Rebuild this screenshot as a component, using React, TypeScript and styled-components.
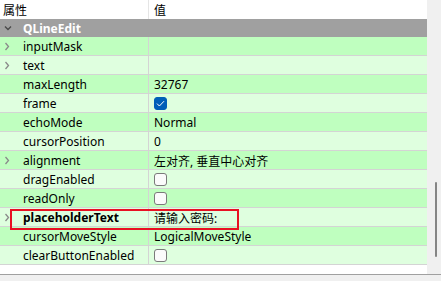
import React from 'react';
import styled, { createGlobalStyle } from 'styled-components';

const GlobalStyle = createGlobalStyle`
  html, body {
    margin: 0;
    padding: 0;
    background: #f0f0f0;
  }
  body {
    font-family: "Noto Sans", "Noto Sans CJK SC", sans-serif;
    font-size: 12px;
    color: #000;
  }
`;

const Window = styled.div`
  width: 441px;
  height: 281px;
  display: flex;
  flex-direction: column;
  overflow: hidden;
`;

const Main = styled.div`
  display: flex;
  height: 274px;
  border-bottom: 1px solid #a0a0a0;
`;

const Table = styled.div`
  width: 427px;
  background: #fff;
  display: flex;
  flex-direction: column;
`;

const ScrollTrack = styled.div`
  flex: 1;
  background: #f0f0f0;
  position: relative;
`;

const ScrollThumb = styled.div`
  position: absolute;
  left: 8px;
  top: 182px;
  width: 2px;
  height: 75px;
  border-radius: 1px;
  background: #858585;
`;

const HeaderRow = styled.div`
  display: grid;
  grid-template-columns: 148px 1fr;
  height: 19px;
  background: #fff;
`;

const HeaderCell = styled.div<{ $first?: boolean }>`
  display: flex;
  align-items: center;
  padding-left: ${(p) => (p.$first ? '3px' : '5px')};
  border-left: ${(p) => (p.$first ? 'none' : '1px solid #e5e5e5')};
`;

const GroupRow = styled.div`
  height: 18px;
  background: #a0a0a0;
  display: flex;
  align-items: center;
  color: #fff;
  font-weight: bold;
`;

const Row = styled.div<{ $alt: boolean }>`
  position: relative;
  display: grid;
  grid-template-columns: 148px 1fr;
  height: 18px;
  border-bottom: 1px solid #d4d4d4;
  background: ${(p) => (p.$alt ? '#dfffdf' : '#bfffbf')};
`;

const NameCell = styled.div<{ $bold?: boolean }>`
  display: flex;
  align-items: center;
  padding-top: 1px;
  font-weight: ${(p) => (p.$bold ? 'bold' : 'normal')};
  white-space: nowrap;
`;

const ValueCell = styled.div`
  display: flex;
  align-items: center;
  padding-left: 5px;
  padding-top: 1px;
  border-left: 1px solid #d4d4d4;
  white-space: nowrap;
  overflow: hidden;
`;

const ArrowSlot = styled.span`
  width: 23px;
  display: flex;
  align-items: center;
  padding-left: 4px;
  box-sizing: border-box;
`;

const CheckBox = styled.span<{ $checked?: boolean }>`
  width: 13px;
  height: 13px;
  box-sizing: border-box;
  border-radius: 3px;
  display: flex;
  align-items: center;
  justify-content: center;
  background: ${(p) => (p.$checked ? '#005fb8' : '#fbfbfb')};
  border: 1px solid ${(p) => (p.$checked ? '#005fb8' : '#7a7a7a')};
`;

const Highlight = styled.div`
  position: absolute;
  z-index: 1;
  left: 10px;
  top: 1px;
  width: 229px;
  height: 21px;
  box-sizing: border-box;
  border: 2px solid #e81123;
  pointer-events: none;
`;

const Filler = styled.div`
  flex: 1;
  background: #fff;
`;

const Bottom = styled.div`
  flex: 1;
  background: #f0f0f0;
`;

const Chevron = ({ down }: { down?: boolean }) =>
  down ? (
    <svg width="8" height="6" viewBox="0 0 8 6">
      <path d="M1 1.5 L4 4.5 L7 1.5" fill="none" stroke="#4a4a4a" strokeWidth="1.4" />
    </svg>
  ) : (
    <svg width="6" height="9" viewBox="0 0 6 9">
      <path d="M1.5 1 L4.5 4.5 L1.5 8" fill="none" stroke="#8a8a8a" strokeWidth="1.3" />
    </svg>
  );

const Check = () => (
  <svg width="9" height="7" viewBox="0 0 9 7">
    <path d="M1 3.6 L3.4 6 L8 1.2" fill="none" stroke="#fff" strokeWidth="1" />
  </svg>
);

type Prop = {
  name: string;
  value?: string;
  check?: boolean;
  expand?: boolean;
  bold?: boolean;
  mark?: boolean;
};

const props: Prop[] = [
  { name: 'inputMask', expand: true },
  { name: 'text', expand: true },
  { name: 'maxLength', value: '32767' },
  { name: 'frame', check: true },
  { name: 'echoMode', value: 'Normal' },
  { name: 'cursorPosition', value: '0' },
  { name: 'alignment', value: '左对齐, 垂直中心对齐', expand: true },
  { name: 'dragEnabled', check: false },
  { name: 'readOnly', check: false },
  { name: 'placeholderText', value: '请输入密码:', expand: true, bold: true, mark: true },
  { name: 'cursorMoveStyle', value: 'LogicalMoveStyle' },
  { name: 'clearButtonEnabled', check: false },
];

export default function App() {
  return (
    <Window>
      <GlobalStyle />
      <Main>
        <Table>
          <HeaderRow>
            <HeaderCell $first>属性</HeaderCell>
            <HeaderCell>值</HeaderCell>
          </HeaderRow>
          <GroupRow>
            <ArrowSlot>
              <Chevron down />
            </ArrowSlot>
            QLineEdit
          </GroupRow>
          {props.map((p, i) => (
            <Row key={p.name} $alt={i % 2 === 1}>
              <NameCell $bold={p.bold}>
                <ArrowSlot>{p.expand && <Chevron />}</ArrowSlot>
                {p.name}
              </NameCell>
              <ValueCell>
                {p.check !== undefined ? (
                  <CheckBox $checked={p.check}>{p.check && <Check />}</CheckBox>
                ) : (
                  p.value
                )}
              </ValueCell>
              {p.mark && <Highlight />}
            </Row>
          ))}
          <Filler />
        </Table>
        <ScrollTrack>
          <ScrollThumb />
        </ScrollTrack>
      </Main>
      <Bottom />
    </Window>
  );
}
